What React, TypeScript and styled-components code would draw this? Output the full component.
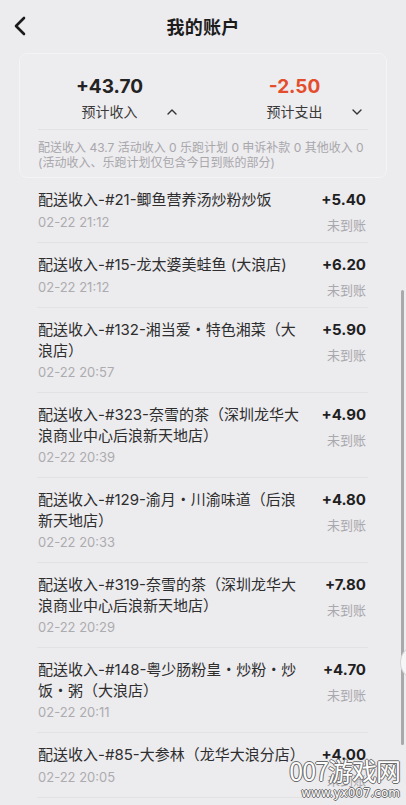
import React from "react";
import styled, { createGlobalStyle } from "styled-components";

const GlobalStyle = createGlobalStyle`
  html, body {
    margin: 0;
    padding: 0;
    background: #ecebee;
  }
  body {
    font-family: Inter, "Noto Sans CJK SC", "Noto Sans", sans-serif;
    color: #262626;
    -webkit-font-smoothing: antialiased;
  }
  * { box-sizing: border-box; }
`;

const Page = styled.div`
  position: relative;
  width: 406px;
  height: 805px;
  overflow: hidden;
  background: #ecebee;
`;

const Header = styled.header`
  display: grid;
  grid-template-columns: 44px 1fr 44px;
  align-items: center;
  height: 53px;
  padding-bottom: 1px;
`;

const BackButton = styled.button`
  display: flex;
  align-items: center;
  justify-content: flex-start;
  padding: 0 0 0 13px;
  border: 0;
  background: none;
  height: 30px;
  color: #1a1a1a;
`;

const Title = styled.h1`
  margin: 0;
  text-align: center;
  font-size: 18px;
  font-weight: 700;
  color: #1c1c1c;
  letter-spacing: 0.3px;
`;

const Card = styled.section`
  margin: 0 19px 0 19px;
  border: 1px solid #f4f3f6;
  border-radius: 8px;
  background: #edecef;
  padding: 20px 18px 7px 18px;
`;

const SummaryRow = styled.div`
  display: grid;
  grid-template-columns: 117px 117px;
  column-gap: 68px;
  padding-left: 22px;
`;

const SummaryItem = styled.div`
  display: flex;
  align-items: flex-end;
`;

const SummaryBlock = styled.div`
  width: 100px;
  display: flex;
  flex-direction: column;
  align-items: center;
  gap: 3px;
`;

const BigAmount = styled.div<{ $negative?: boolean }>`
  font-size: 19px;
  line-height: 25px;
  font-weight: 700;
  color: ${(p) => (p.$negative ? "#e44d2c" : "#232323")};
`;

const SummaryLabel = styled.div`
  font-size: 14px;
  line-height: 20px;
  color: #3a3a3a;
`;

const Caret = styled.span`
  display: flex;
  width: 10px;
  height: 20px;
  margin-left: 8px;
  align-items: center;
  justify-content: center;
  color: #333;
`;

const Divider = styled.hr`
  margin: 7px 0 10px;
  border: 0;
  border-top: 1px solid #e2e1e4;
`;

const Breakdown = styled.p`
  margin: 0;
  font-size: 12px;
  line-height: 15px;
  color: #a8a7ab;
`;

const List = styled.ul`
  list-style: none;
  margin: 0 38px 0 37px;
  padding: 0;
`;

const Item = styled.li`
  display: flex;
  align-items: flex-start;
  justify-content: space-between;
  padding: 12px 2px 9px 1px;
  border-bottom: 1px solid #e2e1e4;
`;

const ItemMain = styled.div`
  width: 270px;
  display: flex;
  flex-direction: column;
`;

const ItemTitle = styled.div`
  font-size: 15px;
  line-height: 20.5px;
  color: #2e2e2e;
`;

const ItemTime = styled.div`
  font-size: 13px;
  line-height: 22px;
  color: #acabaf;
`;

const ItemSide = styled.div`
  display: flex;
  flex-direction: column;
  align-items: flex-end;
  flex-shrink: 0;
`;

const ItemAmount = styled.div`
  font-size: 15px;
  line-height: 20px;
  font-weight: 700;
  color: #1f1f1f;
`;

const ItemStatus = styled.div`
  font-size: 13px;
  line-height: 16px;
  margin-top: 7px;
  color: #a9a8ac;
`;

const ScrollBar = styled.div`
  position: absolute;
  left: 401px;
  top: 290px;
  width: 3px;
  height: 455px;
  border-radius: 2px;
  background: #a9a9ab;
`;

const EdgeHandle = styled.div`
  position: absolute;
  left: 400px;
  top: 646px;
  width: 30px;
  height: 33px;
  border-radius: 50%;
  background: #f6f6f7;
  border: 1px solid #d5d5d8;
`;

const Watermark = styled.div`
  position: absolute;
  right: 6px;
  bottom: 5px;
  display: flex;
  flex-direction: column;
  align-items: flex-end;
  color: #ffffff;
  pointer-events: none;
  text-shadow: 1px 0 0 #6a6a6a, -1px 0 0 #6a6a6a, 0 1px 0 #6a6a6a, 0 -1px 0 #6a6a6a;
`;

const WatermarkMain = styled.div`
  font-family: "Noto Sans CJK SC", sans-serif;
  font-size: 25px;
  line-height: 24px;
  font-weight: 400;
  letter-spacing: -1px;
`;

const WatermarkSub = styled.div`
  font-family: "DejaVu Sans", sans-serif;
  font-size: 12px;
  line-height: 14px;
  margin-top: 4px;
`;

const ChevronLeft = () => (
  <svg width="14" height="20" viewBox="0 0 14 20" fill="none">
    <path d="M11 2 L3 10 L11 18" stroke="currentColor" strokeWidth="2.6" strokeLinecap="round" strokeLinejoin="round" />
  </svg>
);

const SmallCaret = ({ up }: { up?: boolean }) => (
  <svg width="10" height="6" viewBox="0 0 10 6" fill="none">
    <path
      d={up ? "M1 5 L5 1 L9 5" : "M1 1 L5 5 L9 1"}
      stroke="currentColor"
      strokeWidth="1.4"
      strokeLinecap="round"
      strokeLinejoin="round"
    />
  </svg>
);

const items = [
  { title: "配送收入-#21-鲫鱼营养汤炒粉炒饭", time: "02-22 21:12", amount: "+5.40" },
  { title: "配送收入-#15-龙太婆美蛙鱼 (大浪店)", time: "02-22 21:12", amount: "+6.20" },
  { title: "配送收入-#132-湘当爱・特色湘菜（大浪店）", time: "02-22 20:57", amount: "+5.90" },
  { title: "配送收入-#323-奈雪的茶（深圳龙华大浪商业中心后浪新天地店）", time: "02-22 20:39", amount: "+4.90" },
  { title: "配送收入-#129-渝月・川渝味道（后浪新天地店）", time: "02-22 20:33", amount: "+4.80" },
  { title: "配送收入-#319-奈雪的茶（深圳龙华大浪商业中心后浪新天地店）", time: "02-22 20:29", amount: "+7.80" },
  { title: "配送收入-#148-粤少肠粉皇・炒粉・炒饭・粥（大浪店）", time: "02-22 20:11", amount: "+4.70" },
  { title: "配送收入-#85-大参林（龙华大浪分店）", time: "02-22 20:05", amount: "+4.00" },
  { title: "配送收入-#62-喜茶（大浪店）", time: "02-22 19:58", amount: "+5.20" },
];

export default function App() {
  return (
    <Page>
      <GlobalStyle />
      <Header>
        <BackButton aria-label="返回">
          <ChevronLeft />
        </BackButton>
        <Title>我的账户</Title>
        <span />
      </Header>

      <Card>
        <SummaryRow>
          <SummaryItem>
            <SummaryBlock>
              <BigAmount>+43.70</BigAmount>
              <SummaryLabel>预计收入</SummaryLabel>
            </SummaryBlock>
            <Caret>
              <SmallCaret up />
            </Caret>
          </SummaryItem>
          <SummaryItem>
            <SummaryBlock>
              <BigAmount $negative>-2.50</BigAmount>
              <SummaryLabel>预计支出</SummaryLabel>
            </SummaryBlock>
            <Caret>
              <SmallCaret />
            </Caret>
          </SummaryItem>
        </SummaryRow>
        <Divider />
        <Breakdown>
          配送收入 43.7 活动收入 0 乐跑计划 0 申诉补款 0 其他收入 0
          <br />
          (活动收入、乐跑计划仅包含今日到账的部分)
        </Breakdown>
      </Card>

      <List>
        {items.map((it, i) => (
          <Item key={i}>
            <ItemMain>
              <ItemTitle>{it.title}</ItemTitle>
              <ItemTime>{it.time}</ItemTime>
            </ItemMain>
            <ItemSide>
              <ItemAmount>{it.amount}</ItemAmount>
              <ItemStatus>未到账</ItemStatus>
            </ItemSide>
          </Item>
        ))}
      </List>

      <ScrollBar />
      <EdgeHandle />
      <Watermark>
        <WatermarkMain>007游戏网</WatermarkMain>
        <WatermarkSub>www.yx007.com</WatermarkSub>
      </Watermark>
    </Page>
  );
}
